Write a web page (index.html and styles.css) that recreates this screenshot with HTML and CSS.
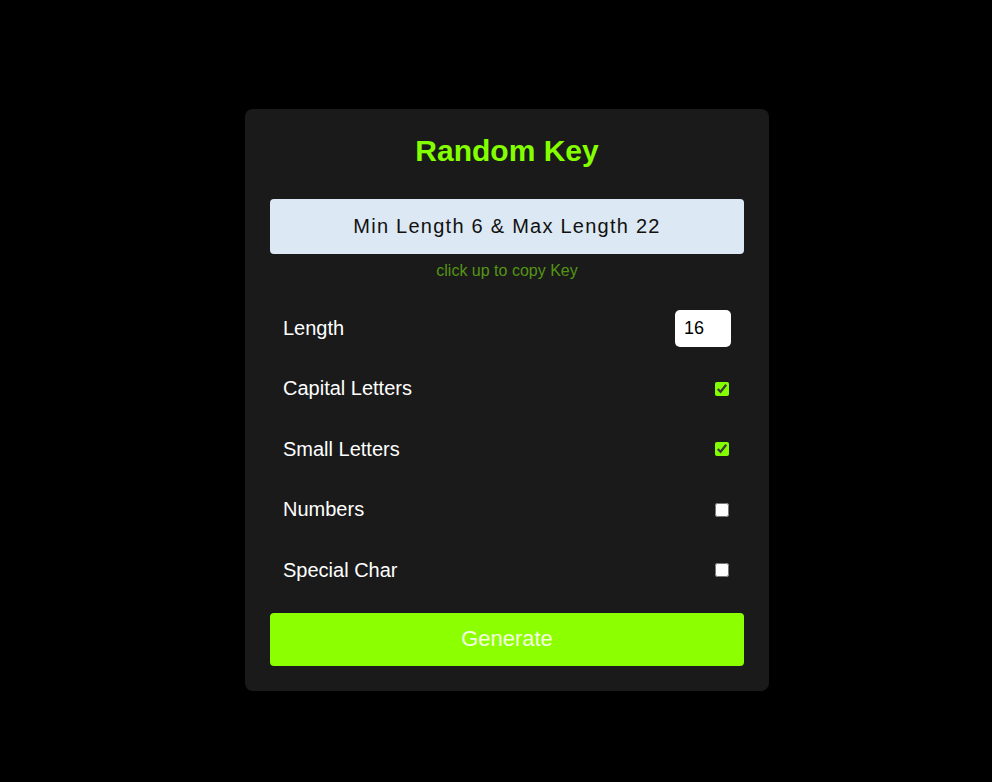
FILE: index.html
```html
<!DOCTYPE html>
<html lang="en">
<head>
<meta charset="utf-8">
<title>Random Key</title>
<link rel="stylesheet" href="styles.css">
</head>
<body>
<main class="page">
  <section class="card">
    <h1 class="title">Random Key</h1>
    <input class="key-field" type="text" readonly placeholder="Min Length 6 &amp; Max Length 22">
    <p class="hint">click up to copy Key</p>
    <div class="options">
      <label class="row"><span class="row-label">Length</span><input class="num" type="number" value="16" min="6" max="22"></label>
      <label class="row"><span class="row-label">Capital Letters</span><input class="check" type="checkbox" checked></label>
      <label class="row"><span class="row-label">Small Letters</span><input class="check" type="checkbox" checked></label>
      <label class="row"><span class="row-label">Numbers</span><input class="check" type="checkbox"></label>
      <label class="row"><span class="row-label">Special Char</span><input class="check" type="checkbox"></label>
    </div>
    <button class="generate" type="button">Generate</button>
  </section>
</main>
</body>
</html>
```

FILE: styles.css
```css
* { box-sizing: border-box; }
html, body { margin: 0; padding: 0; }
body {
  background: #000;
  font-family: "Liberation Sans", Arial, sans-serif;
  color: #fff;
}
.page {
  min-height: 782px;
  display: flex;
  justify-content: center;
  padding-top: 109px;
  padding-left: 22px;
}
.card {
  width: 524px;
  height: 582px;
  background: #1a1a1a;
  border-radius: 8px;
  padding: 25px;
  display: flex;
  flex-direction: column;
}
.title {
  margin: 0 0 31px;
  font-size: 30px;
  line-height: 34px;
  font-weight: bold;
  text-align: center;
  color: #84ff00;
}
.key-field {
  width: 100%;
  height: 55px;
  border: none;
  border-radius: 4px;
  background: #dce8f3;
  font-family: "Liberation Sans", Arial, sans-serif;
  font-size: 20px;
  letter-spacing: 1.25px;
  text-align: center;
  color: #111;
  outline: none;
}
.key-field::placeholder { color: #111; opacity: 1; }
.hint {
  margin: 8px 0 0;
  font-size: 16px;
  line-height: 18px;
  text-align: center;
  color: #549514;
}
.options {
  margin-top: 17.75px;
  display: flex;
  flex-direction: column;
}
.row {
  height: 60.5px;
  padding: 0 13px;
  display: flex;
  align-items: center;
  justify-content: space-between;
  font-size: 20px;
}
.num {
  width: 56px;
  height: 37px;
  border: none;
  border-radius: 5px;
  background: #fff;
  padding: 0 0 0 9px;
  font-family: "Liberation Sans", Arial, sans-serif;
  font-size: 18px;
  color: #000;
  outline: none;
}
.check {
  width: 14px;
  height: 14px;
  margin: 3px 2px 3px 4px;
  accent-color: #84ff00;
}
.generate {
  margin-top: 12.75px;
  height: 53px;
  width: 100%;
  border: none;
  border-radius: 4px;
  background: #8cff00;
  color: #f4ffe0;
  font-family: "Liberation Sans", Arial, sans-serif;
  font-size: 22px;
  padding: 0 0 2px;
}
```
